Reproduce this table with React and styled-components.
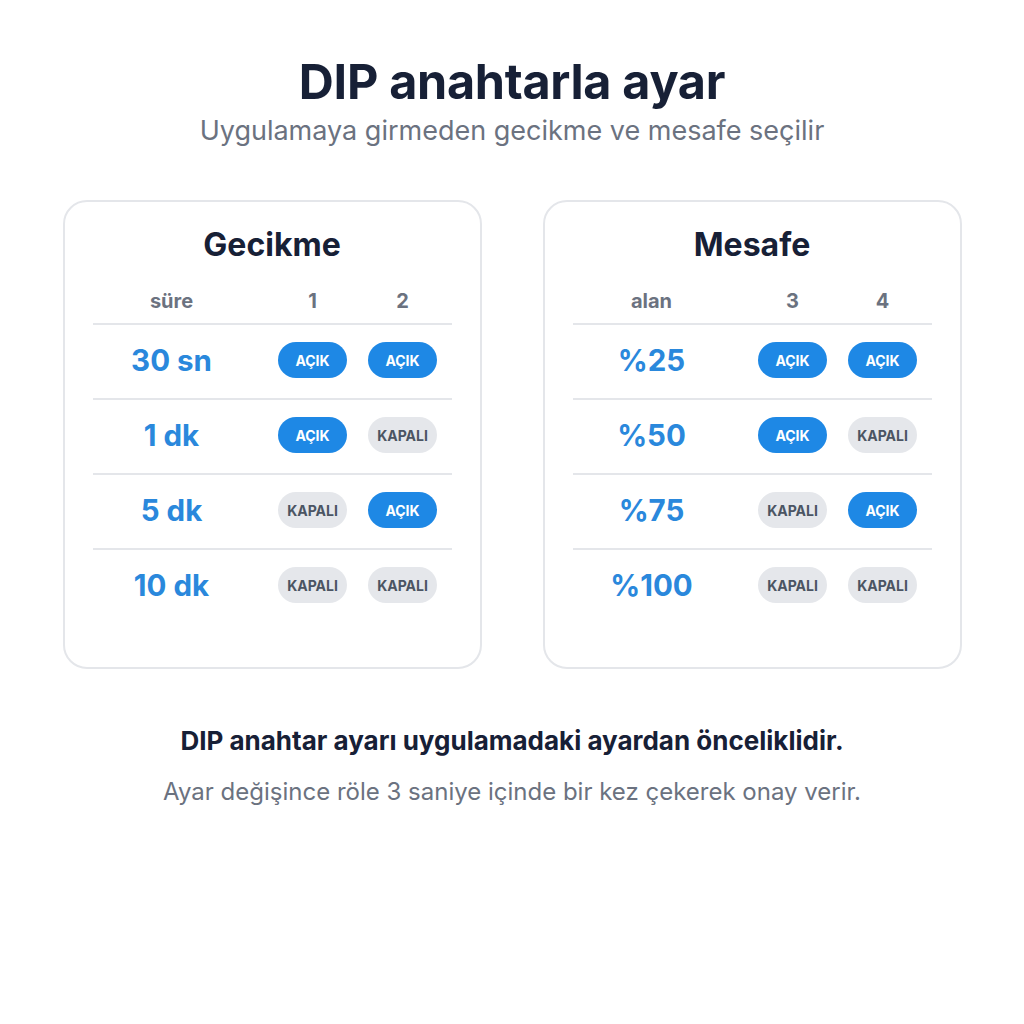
import React from 'react';
import styled, { createGlobalStyle } from 'styled-components';

const GlobalStyle = createGlobalStyle`
  body {
    margin: 0;
    background: #ffffff;
    font-family: Inter, "Noto Sans", "Liberation Sans", sans-serif;
  }
`;

const tables = [
  {
    title: 'Gecikme',
    label: 'süre',
    cols: ['1', '2'],
    rows: [
      ['30 sn', true, true],
      ['1 dk', true, false],
      ['5 dk', false, true],
      ['10 dk', false, false],
    ],
  },
  {
    title: 'Mesafe',
    label: 'alan',
    cols: ['3', '4'],
    rows: [
      ['%25', true, true],
      ['%50', true, false],
      ['%75', false, true],
      ['%100', false, false],
    ],
  },
];

const App = () => {
  return (
    <Page>
      <GlobalStyle />
      <Header>
        <Title>DIP anahtarla ayar</Title>
        <Subtitle>Uygulamaya girmeden gecikme ve mesafe seçilir</Subtitle>
      </Header>
      <Cards>
        {tables.map((t) => (
          <Card key={t.title}>
            <CardTitle>{t.title}</CardTitle>
            <Row head>
              <HeadCell first>{t.label}</HeadCell>
              {t.cols.map((c) => (
                <HeadCell key={c}>{c}</HeadCell>
              ))}
            </Row>
            {t.rows.map(([value, a, b], i) => (
              <Row key={value} last={i === t.rows.length - 1}>
                <Value>{value}</Value>
                <Cell>
                  <Pill on={a}>{a ? 'AÇIK' : 'KAPALI'}</Pill>
                </Cell>
                <Cell>
                  <Pill on={b}>{b ? 'AÇIK' : 'KAPALI'}</Pill>
                </Cell>
              </Row>
            ))}
          </Card>
        ))}
      </Cards>
      <Footer>
        <Note>DIP anahtar ayarı uygulamadaki ayardan önceliklidir.</Note>
        <SubNote>Ayar değişince röle 3 saniye içinde bir kez çekerek onay verir.</SubNote>
      </Footer>
    </Page>
  );
};
export default App;

const Page = styled.div`
  width: 1024px;
  height: 1024px;
  box-sizing: border-box;
  padding-top: 53px;
  display: flex;
  flex-direction: column;
  align-items: center;
`;

const Header = styled.div`
  display: flex;
  flex-direction: column;
  align-items: center;
`;

const Title = styled.h1`
  margin: 0;
  font-size: 48.5px;
  line-height: 58px;
  font-weight: 700;
  color: #172036;
  letter-spacing: -0.3px;
`;

const Subtitle = styled.p`
  margin: 3px 0 0;
  font-size: 27px;
  line-height: 34px;
  color: #6b7280;
`;

const Cards = styled.div`
  margin-top: 52px;
  display: flex;
  gap: 61px;
`;

const Card = styled.div`
  width: 419px;
  height: 469px;
  box-sizing: border-box;
  border: 2px solid #e4e6ea;
  border-radius: 24px;
  padding: 23px 28px 0;
  display: flex;
  flex-direction: column;
`;

const CardTitle = styled.h2`
  margin: 0 0 14px;
  text-align: center;
  font-size: 32px;
  line-height: 40px;
  font-weight: 700;
  color: #172036;
`;

const Row = styled.div`
  display: grid;
  grid-template-columns: 1fr 90px 90px;
  padding-right: 4px;
  align-items: center;
  flex-shrink: 0;
  height: ${(p) => (p.head ? '44px' : '70px')};
  padding-bottom: ${(p) => (p.head ? '0' : '3px')};
  border-bottom: ${(p) => (p.last ? 'none' : '2px solid #e4e6ea')};
`;

const HeadCell = styled.div`
  text-align: center;
  font-size: 20px;
  font-weight: 700;
  color: #6b7280;
  padding-right: ${(p) => (p.first ? '17px' : '0')};
`;

const Value = styled.div`
  text-align: center;
  padding-right: 17px;
  font-size: 29.5px;
  font-weight: 700;
  color: #2a88dc;
`;

const Cell = styled.div`
  display: flex;
  justify-content: center;
`;

const Pill = styled.span`
  width: 69px;
  height: 36px;
  border-radius: 18px;
  display: flex;
  align-items: center;
  justify-content: center;
  font-size: 14px;
  font-weight: 700;
  background: ${(p) => (p.on ? '#1e88e5' : '#e5e7eb')};
  color: ${(p) => (p.on ? '#ffffff' : '#4b5563')};
`;

const Footer = styled.div`
  margin-top: 56px;
  display: flex;
  flex-direction: column;
  align-items: center;
`;

const Note = styled.p`
  margin: 0;
  font-size: 26px;
  line-height: 32px;
  font-weight: 700;
  color: #172036;
`;

const SubNote = styled.p`
  margin: 19px 0 0;
  font-size: 24px;
  line-height: 32px;
  color: #6b7280;
`;
